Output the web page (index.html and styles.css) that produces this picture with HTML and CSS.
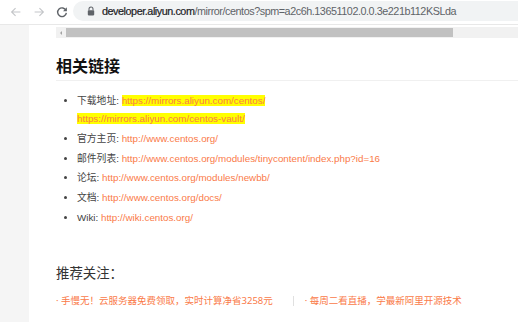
FILE: index.html
```html
<!DOCTYPE html>
<html lang="zh-CN">
<head>
    <meta charset="UTF-8">
    <meta name="viewport" content="width=device-width, initial-scale=1.0">
    <title>CentOS 镜像</title>
    <link rel="stylesheet" href="styles.css">
</head>
<body>
    <!-- Browser toolbar -->
    <div class="toolbar">
        <div class="nav-buttons">
            <svg class="nav-icon" viewBox="0 0 16 16"><path d="M13 8H3M7.5 3.5L3 8l4.5 4.5" fill="none" stroke="#c4c6c9" stroke-width="1.3"/></svg>
            <svg class="nav-icon" viewBox="0 0 16 16"><path d="M3 8h10M8.5 3.5L13 8l-4.5 4.5" fill="none" stroke="#c4c6c9" stroke-width="1.3"/></svg>
            <svg class="nav-icon" viewBox="0 0 16 16"><path d="M12.6 6.2A5 5 0 1 0 13 9" fill="none" stroke="#5f6368" stroke-width="1.6"/><path d="M13.6 2.6v4.4H9.2z" fill="#5f6368"/></svg>
        </div>
        <div class="address">
            <svg class="lock" viewBox="0 0 10 12"><path d="M2.5 5V3.6a2.5 2.5 0 0 1 5 0V5" fill="none" stroke="#5f6368" stroke-width="1.3"/><rect x="1" y="5" width="8" height="6.5" rx="1" fill="#5f6368"/></svg>
            <span class="host">developer.aliyun.com</span><span class="path">/mirror/centos?spm=a2c6h.13651102.0.0.3e221b112KSLda</span>
        </div>
    </div>

    <div class="page">
        <div class="side"></div>
        <div class="content">
            <!-- Horizontal scrollbar of the block above -->
            <div class="hscroll">
                <span class="hscroll-arrow"></span>
                <span class="hscroll-thumb"></span>
            </div>

            <h2 class="section-title">相关链接</h2>
            <ul class="link-list">
                <li>下载地址: <a class="mark" href="#">https://mirrors.aliyun.com/centos/</a><br><a class="mark" href="#">https://mirrors.aliyun.com/centos-vault/</a></li>
                <li>官方主页: <a href="#">http://www.centos.org/</a></li>
                <li>邮件列表: <a href="#">http://www.centos.org/modules/tinycontent/index.php?id=16</a></li>
                <li>论坛: <a href="#">http://www.centos.org/modules/newbb/</a></li>
                <li>文档: <a href="#">http://www.centos.org/docs/</a></li>
                <li>Wiki: <a href="#">http://wiki.centos.org/</a></li>
            </ul>

            <div class="recommend">
                <h3 class="recommend-title">推荐关注：</h3>
                <div class="recommend-links">
                    <a href="#">· 手慢无！云服务器免费领取，实时计算净省3258元</a>
                    <span class="divider"></span>
                    <a href="#">· 每周二看直播，学最新阿里开源技术</a>
                </div>
            </div>
        </div>
    </div>
</body>
</html>
```

FILE: styles.css
```css
/* Page base */
body {
    margin: 0;
    font-family: "Noto Sans", "Noto Sans CJK SC", sans-serif;
    background-color: #fff;
    color: #333;
}

a {
    color: #fa7a48;
    text-decoration: none;
}

/* Browser toolbar */
.toolbar {
    display: flex;
    align-items: center;
    height: 25px;
    border-bottom: 1px solid #e8e8e8;
    box-sizing: border-box;
}

.nav-buttons {
    display: flex;
    align-items: center;
    gap: 9px;
    padding-left: 9px;
    width: 64px;
}

.nav-icon {
    width: 14px;
    height: 14px;
}

.address {
    flex: 1;
    display: flex;
    align-items: center;
    height: 20px;
    margin-top: -3px;
    padding-left: 14px;
    background-color: #f1f3f4;
    border-radius: 10px 0 0 10px;
    font-family: "Liberation Sans", "Noto Sans", sans-serif;
    font-size: 10.8px;
    letter-spacing: -0.45px;
    white-space: nowrap;
    overflow: hidden;
}

.lock {
    width: 8px;
    height: 10px;
    margin-right: 7px;
}

.host {
    color: #202124;
    -webkit-text-stroke: 0.2px #202124;
}

.path {
    color: #5f6368;
}

/* Page body */
.page {
    display: flex;
    min-height: 297px;
}

.side {
    width: 29px;
    background-color: #f5f5f5;
}

.content {
    flex: 1;
    padding-left: 27px;
}

/* Scrollbar strip */
.hscroll {
    display: flex;
    align-items: center;
    height: 11px;
    margin-top: 2px;
    background-color: #f1f1f1;
}

.hscroll-arrow {
    width: 0;
    height: 0;
    margin: 0 4px 0 4px;
    border-top: 2px solid transparent;
    border-bottom: 2px solid transparent;
    border-right: 2px solid #a3a3a3;
}

.hscroll-thumb {
    width: 387px;
    height: 9px;
    background-color: #c1c1c1;
}

/* Related links */
.section-title {
    margin: 17px 0 0;
    padding-bottom: 3px;
    border-bottom: 1px solid #f0f0f0;
    font-size: 16px;
    font-weight: bold;
    line-height: 22px;
    color: #111;
}

.link-list {
    margin: 11px 0 0;
    padding-left: 21px;
    font-family: "Liberation Sans", "Noto Sans CJK SC", sans-serif;
    font-size: 9.8px;
    line-height: 18px;
    color: #444;
}

.link-list li {
    margin-bottom: 1.75px;
}

.mark {
    background-color: #ffff00;
}

/* Recommendations */
.recommend {
    margin-top: 37px;
}

.recommend-title {
    margin: 0;
    font-size: 13.4px;
    font-weight: normal;
    line-height: 18px;
    color: #333;
}

.recommend-links {
    display: flex;
    align-items: center;
    margin-top: 12px;
    font-size: 9.5px;
    line-height: 14px;
}

.divider {
    width: 1px;
    height: 10px;
    margin: 0 11px 0 20px;
    background-color: #e0e0e0;
}
```
